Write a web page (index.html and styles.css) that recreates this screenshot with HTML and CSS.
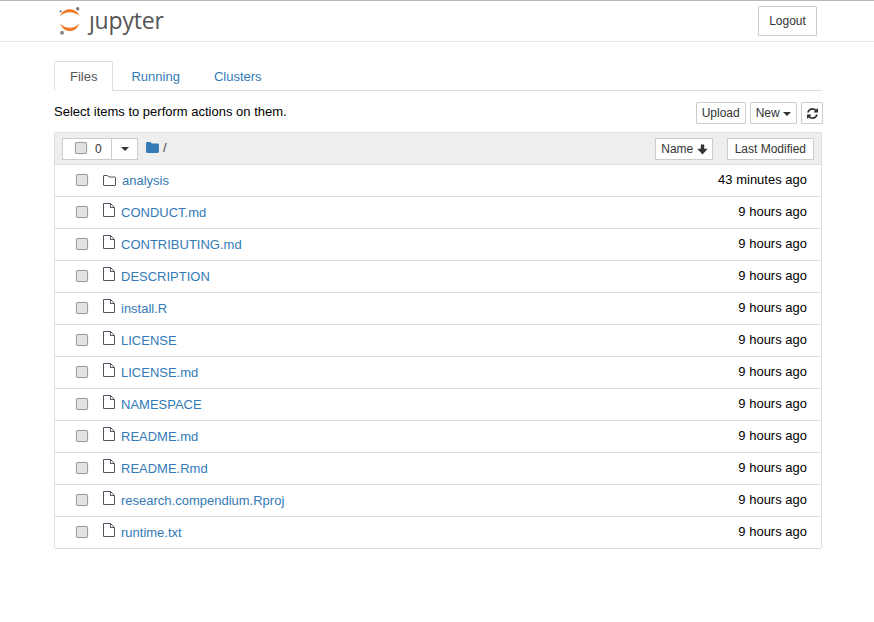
FILE: index.html
```html
<!DOCTYPE html>
<html lang="en">

<head>
    <meta charset="UTF-8">
    <title>Home</title>
    <link rel="stylesheet" href="styles.css">
</head>

<body>
    <div id="header">
        <div class="logo">
            <svg class="logo-mark" width="24" height="30" viewBox="0 0 24 30">
                <path fill="#f37726" d="M2 10C4 5.500 7.500 3.300 11.800 3.300S19.500 5.500 21.500 10C18.500 7.500 15.500 6.300 11.800 6.300S5 7.500 2 10z" />
                <path fill="#f37726" d="M2 17.500C5 20.500 8 21.800 11.800 21.800S18.500 20.500 21.500 17.500C19.500 22.500 16 25 11.800 25S4 22.500 2 17.500z" />
                <circle cx="19.700" cy="2.700" r="1.700" fill="#767677" />
                <circle cx="2.700" cy="5.300" r="1.100" fill="#767677" />
                <circle cx="4" cy="26.700" r="2" fill="#8a8a8b" />
            </svg>
            <span class="logo-text">ȷupyter</span>
        </div>
        <button class="btn btn-logout">Logout</button>
    </div>

    <div id="main">
        <ul class="tabs">
            <li class="tab active">Files</li>
            <li class="tab tab-running">Running</li>
            <li class="tab">Clusters</li>
        </ul>

        <div class="toolbar">
            <span>Select items to perform actions on them.</span>
            <div class="toolbar-buttons">
                <button class="btn btn-xs">Upload</button>
                <button class="btn btn-xs">New <i class="caret"></i></button>
                <button class="btn btn-xs btn-refresh">
                    <svg width="11" height="11" viewBox="0 0 1536 1536">
                        <path fill="#333" d="M1511 928q0 5-1 7-64 268-268 434.500T764 1536q-146 0-282.500-55T238 1324l-129 129q-19 19-45 19t-45-19-19-45V960q0-26 19-45t45-19h448q26 0 45 19t19 45-19 45l-137 137q71 66 161 102t187 36q134 0 250-65t186-179q11-17 53-117 8-23 30-23h192q13 0 22.500 9.500t9.500 22.500zM1536 128v448q0 26-19 45t-45 19h-448q-26 0-45-19t-19-45 19-45l138-138Q969 256 768 256q-134 0-250 65T332 500q-11 17-53 117-8 23-30 23H50q-13 0-22.500-9.500T18 608v-7q65-268 270-434.500T768 0q146 0 284 55.500T1297 212l130-129q19-19 45-19t45 19 19 45z" />
                    </svg>
                </button>
            </div>
        </div>

        <div class="list">
            <div class="list-header">
                <div class="select-group">
                    <span class="select-count"><input type="checkbox" class="check"> 0</span>
                    <span class="select-drop"><i class="caret"></i></span>
                </div>
                <svg class="crumb-icon" width="13" height="11" viewBox="0 0 14 12">
                    <path fill="#337ab7" d="M1.300 0h3.600l1.300 1.500h6.500c.7 0 1.300.6 1.300 1.300v7.900c0 .7-.6 1.300-1.300 1.300H1.300C.6 12 0 11.400 0 10.700V1.300C0 .6.600 0 1.300 0z" />
                </svg>
                <span class="crumb-sep">/</span>
                <div class="sort-buttons">
                    <button class="btn btn-xs btn-name">Name
                        <svg width="11" height="11" viewBox="0 0 11 11">
                            <path fill="#333" d="M3.800 .5h3.400v4.200h3.500L5.500 10.500 .3 4.700h3.500z" />
                        </svg>
                    </button>
                    <button class="btn btn-xs btn-modified">Last Modified</button>
                </div>
            </div>

            <div class="row">
                <input type="checkbox" class="check">
                <svg class="icon folder-icon" width="13" height="11" viewBox="0 0 13 11">
                    <path fill="none" stroke="#5a5060" d="M1 .5h3.500l1.500 1.500h6c.3 0 .5.200.5.500v7.500c0 .3-.2.500-.5.500H1c-.3 0-.5-.2-.5-.5V1c0-.3.200-.5.500-.5z" />
                </svg>
                <a class="name folder-name">analysis</a>
                <span class="time">43 minutes ago</span>
            </div>
            <div class="row">
                <input type="checkbox" class="check">
                <svg class="icon file-icon" width="13" height="15" viewBox="0 0 13 15">
                    <path fill="none" stroke="#5a5060" d="M.5 1.500h7l4 4v9h-11zM7.500 1.500v4h4" />
                </svg>
                <a class="name">CONDUCT.md</a>
                <span class="time">9 hours ago</span>
            </div>
            <div class="row">
                <input type="checkbox" class="check">
                <svg class="icon file-icon" width="13" height="15" viewBox="0 0 13 15">
                    <path fill="none" stroke="#5a5060" d="M.5 1.500h7l4 4v9h-11zM7.500 1.500v4h4" />
                </svg>
                <a class="name">CONTRIBUTING.md</a>
                <span class="time">9 hours ago</span>
            </div>
            <div class="row">
                <input type="checkbox" class="check">
                <svg class="icon file-icon" width="13" height="15" viewBox="0 0 13 15">
                    <path fill="none" stroke="#5a5060" d="M.5 1.500h7l4 4v9h-11zM7.500 1.500v4h4" />
                </svg>
                <a class="name">DESCRIPTION</a>
                <span class="time">9 hours ago</span>
            </div>
            <div class="row">
                <input type="checkbox" class="check">
                <svg class="icon file-icon" width="13" height="15" viewBox="0 0 13 15">
                    <path fill="none" stroke="#5a5060" d="M.5 1.500h7l4 4v9h-11zM7.500 1.500v4h4" />
                </svg>
                <a class="name">install.R</a>
                <span class="time">9 hours ago</span>
            </div>
            <div class="row">
                <input type="checkbox" class="check">
                <svg class="icon file-icon" width="13" height="15" viewBox="0 0 13 15">
                    <path fill="none" stroke="#5a5060" d="M.5 1.500h7l4 4v9h-11zM7.500 1.500v4h4" />
                </svg>
                <a class="name">LICENSE</a>
                <span class="time">9 hours ago</span>
            </div>
            <div class="row">
                <input type="checkbox" class="check">
                <svg class="icon file-icon" width="13" height="15" viewBox="0 0 13 15">
                    <path fill="none" stroke="#5a5060" d="M.5 1.500h7l4 4v9h-11zM7.500 1.500v4h4" />
                </svg>
                <a class="name">LICENSE.md</a>
                <span class="time">9 hours ago</span>
            </div>
            <div class="row">
                <input type="checkbox" class="check">
                <svg class="icon file-icon" width="13" height="15" viewBox="0 0 13 15">
                    <path fill="none" stroke="#5a5060" d="M.5 1.500h7l4 4v9h-11zM7.500 1.500v4h4" />
                </svg>
                <a class="name">NAMESPACE</a>
                <span class="time">9 hours ago</span>
            </div>
            <div class="row">
                <input type="checkbox" class="check">
                <svg class="icon file-icon" width="13" height="15" viewBox="0 0 13 15">
                    <path fill="none" stroke="#5a5060" d="M.5 1.500h7l4 4v9h-11zM7.500 1.500v4h4" />
                </svg>
                <a class="name">README.md</a>
                <span class="time">9 hours ago</span>
            </div>
            <div class="row">
                <input type="checkbox" class="check">
                <svg class="icon file-icon" width="13" height="15" viewBox="0 0 13 15">
                    <path fill="none" stroke="#5a5060" d="M.5 1.500h7l4 4v9h-11zM7.500 1.500v4h4" />
                </svg>
                <a class="name">README.Rmd</a>
                <span class="time">9 hours ago</span>
            </div>
            <div class="row">
                <input type="checkbox" class="check">
                <svg class="icon file-icon" width="13" height="15" viewBox="0 0 13 15">
                    <path fill="none" stroke="#5a5060" d="M.5 1.500h7l4 4v9h-11zM7.500 1.500v4h4" />
                </svg>
                <a class="name">research.compendium.Rproj</a>
                <span class="time">9 hours ago</span>
            </div>
            <div class="row">
                <input type="checkbox" class="check">
                <svg class="icon file-icon" width="13" height="15" viewBox="0 0 13 15">
                    <path fill="none" stroke="#5a5060" d="M.5 1.500h7l4 4v9h-11zM7.500 1.500v4h4" />
                </svg>
                <a class="name">runtime.txt</a>
                <span class="time">9 hours ago</span>
            </div>
        </div>
    </div>
</body>

</html>
```

FILE: styles.css
```css
* {
    box-sizing: border-box;
}

body {
    font-family: "Liberation Sans", Arial, sans-serif;
    font-size: 13px;
    line-height: 18px;
    color: #000;
    background-color: #fff;
    margin: 0;
}

#header {
    height: 42px;
    border-top: 1px solid #b8b8b8;
    border-bottom: 1px solid #e7e7e7;
    padding: 5px 57px 0 58px;
    display: flex;
    justify-content: space-between;
    align-items: flex-start;
}

.logo {
    display: flex;
    align-items: flex-start;
}

.logo-text {
    font-family: "Open Sans", sans-serif;
    font-size: 23px;
    line-height: 28px;
    letter-spacing: -0.2px;
    color: #555;
    margin-left: 7px;
}

.btn {
    font-family: inherit;
    font-size: 12px;
    line-height: 18px;
    color: #333;
    background-color: #fff;
    border: 1px solid #ccc;
    border-radius: 1px;
    padding: 1px 5px;
    height: 22px;
    white-space: nowrap;
}

.btn-logout {
    height: 30px;
    width: 59px;
    padding: 0;
}

#main {
    width: 768px;
    margin: 19px 0 0 54px;
}

.tabs {
    list-style: none;
    margin: 0;
    padding: 0;
    display: flex;
    height: 30px;
    border-bottom: 1px solid #ddd;
}

.tab {
    color: #337ab7;
    height: 30px;
    padding: 6px 17px 0 16px;
    border: 1px solid transparent;
    line-height: 18px;
}

.tab-running {
    padding-left: 17px;
    padding-right: 16px;
}

.tab.active {
    color: #555;
    background-color: #fff;
    border-color: #ddd #ddd #fff;
    border-radius: 2px 2px 0 0;
    padding: 6px 15px 0 15px;
}

.toolbar {
    display: flex;
    justify-content: space-between;
    align-items: center;
    height: 22px;
    margin-top: 11px;
    margin-right: -1px;
}

.toolbar span {
    margin-bottom: 3px;
}

.toolbar-buttons {
    display: flex;
    gap: 4px;
}

.btn-refresh {
    width: 22px;
    padding: 0;
    display: flex;
    align-items: center;
    justify-content: center;
}

.caret {
    display: inline-block;
    width: 0;
    height: 0;
    vertical-align: middle;
    border-top: 4px solid #333;
    border-left: 4px solid transparent;
    border-right: 4px solid transparent;
}

.list {
    margin-top: 8px;
    border: 1px solid #ddd;
    border-radius: 2px;
}

.list-header {
    height: 32px;
    background-color: #eee;
    border-bottom: 1px solid #ddd;
    display: flex;
    align-items: center;
    padding: 0 7px;
}

.select-group {
    display: flex;
    height: 22px;
    background-color: #fff;
    border: 1px solid #ccc;
    font-size: 12px;
    color: #333;
}

.select-count {
    width: 49px;
    border-right: 1px solid #ccc;
    display: flex;
    align-items: center;
    padding-left: 12px;
    gap: 8px;
}

.select-drop {
    width: 25px;
    display: flex;
    align-items: center;
    justify-content: center;
    padding-top: 1px;
}

.check {
    appearance: none;
    -webkit-appearance: none;
    width: 12px;
    height: 12px;
    margin: 0 0 1px;
    flex: none;
    background-color: #e2e2e2;
    border: 1px solid #a0a0a0;
    border-radius: 2px;
    box-shadow: 0 0 1px rgba(0, 0, 0, 0.35);
}

.crumb-icon {
    margin-left: 8px;
    margin-bottom: 2px;
}

.crumb-sep {
    margin-left: 4px;
    margin-bottom: 2px;
    color: #444;
}

.sort-buttons {
    margin-left: auto;
    display: flex;
    gap: 14px;
}

.btn-name {
    padding-right: 4px;
}

.btn-name svg {
    vertical-align: -2px;
}

.btn-modified {
    padding: 1px 7px;
}

.row {
    height: 32px;
    border-bottom: 1px solid #ddd;
    display: flex;
    align-items: center;
    padding: 0 14px 0 21px;
}

.row:last-child {
    border-bottom: none;
    height: 31px;
}

.icon {
    margin-left: 15px;
    flex: none;
}

.file-icon {
    margin-bottom: 6px;
}

.name {
    color: #337ab7;
    margin-left: 5px;
}

.folder-name {
    margin-left: 6px;
}

.time {
    margin-left: auto;
    margin-bottom: 2px;
}
```
